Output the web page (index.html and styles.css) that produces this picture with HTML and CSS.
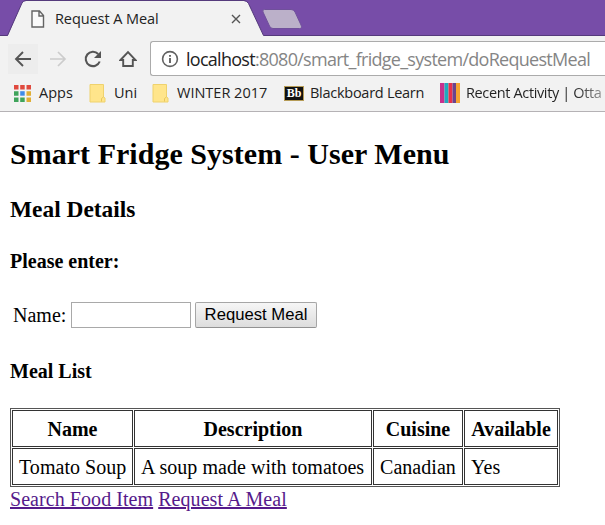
FILE: index.html
```html
<!DOCTYPE html>
<html lang="en">
<head>
<meta charset="utf-8">
<title>Request A Meal</title>
<link rel="stylesheet" href="styles.css">
</head>
<body>
<header class="browser">
  <div class="tabstrip">
    <svg class="tabshape" width="605" height="36" viewBox="0 0 605 36">
      <path d="M0 36H7.500L22 3Q23 1 26 1H244Q247 1 248.500 3.500L263.500 35.500H605V36Z" fill="#f2f2f2"/>
      <path d="M0 35.500H7.500L22 3Q23 .5 26 .5H244Q247 .5 248.500 3.500L263.500 35.500H605" fill="none" stroke="#553a7c"/>
      <path d="M264.500 9.500H291Q294 9.500 295 12L301 25Q302.500 28.500 299.500 28.500H273Q270.500 28.500 269.500 26L263 12Q262 9.500 264.500 9.500Z" fill="#bbb0c9" stroke="#70509b"/>
    </svg>
    <div class="tab">
      <svg width="14" height="18" viewBox="0 0 14 18"><path d="M1 1H8.500L12.500 5.500V17H1ZM8 1V6H12.500" fill="#fafafa" stroke="#646464" stroke-width="1.400"/></svg>
      <span class="tabtitle">Request A Meal</span>
      <svg class="close" width="10" height="10" viewBox="0 0 10 10"><path d="M1 1L9 9M9 1L1 9" stroke="#555" stroke-width="1.400"/></svg>
    </div>
  </div>
  <nav class="toolbar">
    <span class="nav back"><svg width="18" height="16" viewBox="0 0 18 16"><path d="M17 8H2M9 1L2 8L9 15" fill="none" stroke="#555" stroke-width="1.900"/></svg></span>
    <span class="nav forward"><svg width="18" height="16" viewBox="0 0 18 16"><path d="M1 8H16M9 1L16 8L9 15" fill="none" stroke="#ccc" stroke-width="1.700"/></svg></span>
    <span class="nav"><svg width="18" height="18" viewBox="0 0 18 18"><path d="M14.200 4A7.200 7.200 0 1 0 15.700 11.500" fill="none" stroke="#555" stroke-width="2.100"/><path d="M17 1V8H10Z" fill="#555"/></svg></span>
    <span class="nav home"><svg width="18" height="18" viewBox="0 0 18 18"><path d="M1.500 10L9 2.200L16.500 10H13.800V16H4.200V10Z" fill="none" stroke="#555" stroke-width="1.900"/></svg></span>
    <div class="address">
      <svg width="18" height="18" viewBox="0 0 18 18"><circle cx="9" cy="9" r="7.400" fill="none" stroke="#626262" stroke-width="1.600"/><path d="M9 8V13M9 5V6.800" stroke="#626262" stroke-width="1.900"/></svg>
      <span class="url"><span class="host">localhost</span>:8080/smart_fridge_system/doRequestMeal</span>
    </div>
  </nav>
  <div class="bookmarks">
    <svg class="apps" width="17" height="17" viewBox="0 0 17 17">
      <path d="M0 0h4.500v4.500H0zM6.200 0h4.500v4.500H6.200zM12.500 0H17v4.500h-4.500z" fill="#e04a3f"/>
      <path d="M0 6.200h4.500v4.500H0zM0 12.500h4.500V17H0zM6.200 12.500h4.500V17H6.200z" fill="#3fa45b"/>
      <path d="M6.200 6.200h4.500v4.500H6.200z" fill="#3f8be8"/>
      <path d="M12.500 6.200H17v4.500h-4.500zM12.500 12.500H17V17h-4.500z" fill="#e0ae34"/>
    </svg>
    <span class="bm bm-apps">Apps</span>
    <svg class="folder" width="17" height="19" viewBox="0 0 17 19"><path d="M1 .5H14.500V13L16 14V18H1Z" fill="#ffe58b" stroke="#efd26d"/><path d="M12.500 17.500V14.500L14.500 13" fill="none" stroke="#e8c75c"/></svg>
    <span class="bm bm-uni">Uni</span>
    <svg class="folder" width="17" height="19" viewBox="0 0 17 19"><path d="M1 .5H14.500V13L16 14V18H1Z" fill="#ffe58b" stroke="#efd26d"/><path d="M12.500 17.500V14.500L14.500 13" fill="none" stroke="#e8c75c"/></svg>
    <span class="bm bm-winter">WINTER 2017</span>
    <span class="bb">Bb</span>
    <span class="bm bm-board">Blackboard Learn</span>
    <svg class="stripes" width="20" height="20" viewBox="0 0 20 20"><path d="M0 0h4.500v20H0z" fill="#c8308d"/><path d="M4.500 0h4v20h-4z" fill="#21a9be"/><path d="M8.500 0h4v20h-4z" fill="#e8304b"/><path d="M12.500 0h3.500v20h-3.500z" fill="#69438e"/><path d="M16 0h4v20h-4z" fill="#f5a331"/></svg>
    <span class="bm bm-recent">Recent Activity | Otta</span>
  </div>
</header>
<main>
  <h2>Smart Fridge System - User Menu</h2>
  <h3>Meal Details</h3>
  <h4>Please enter:</h4>
  <form>
    <label for="name">Name:</label>
    <input id="name" type="text">
    <button type="button">Request Meal</button>
  </form>
  <h4 class="list">Meal List</h4>
  <table>
    <colgroup><col class="c1"><col class="c2"><col class="c3"><col class="c4"></colgroup>
    <tr><th>Name</th><th>Description</th><th>Cuisine</th><th>Available</th></tr>
    <tr><td>Tomato Soup</td><td>A soup made with tomatoes</td><td>Canadian</td><td>Yes</td></tr>
  </table>
  <div class="links"><a href="#">Search Food Item</a> <a href="#">Request A Meal</a></div>
</main>
</body>
</html>
```
FILE: styles.css
```css
* { box-sizing: border-box; }
body { margin: 0; width: 605px; height: 525px; overflow: hidden; background: #fff; color: #000; font: 20px "Liberation Serif", serif; }
svg { display: block; flex: none; }

.browser { height: 112px; background: #f2f2f2; border-bottom: 1px solid #b5b2b5; font-family: "Open Sans", "Noto Sans", sans-serif; white-space: nowrap; }
.tabstrip { position: relative; height: 36px; background: #774da8; }
.tabshape { position: absolute; left: 0; top: 0; }
.tab { position: relative; display: flex; align-items: center; height: 38px; padding-left: 31px; }
.tabtitle { width: 103px; margin: -2px 0 0 10px; font-size: 14.500px; letter-spacing: -.08px; color: #222; }
.close { margin-left: 73px; }

.toolbar { display: flex; align-items: center; height: 41px; margin-top: 2px; padding-left: 8px; }
.nav { display: flex; flex: none; align-items: center; justify-content: center; width: 30px; height: 30px; margin-right: 5px; }
.back { background: #ededed; }
.home { margin-right: 7px; }
.address { display: flex; align-items: center; flex: 1; height: 35px; padding-left: 10px; background: #fff; border: 1px solid #ababab; border-right: 0; border-radius: 3px 0 0 3px; }
.url { margin-left: 7px; font-size: 18px; letter-spacing: -.72px; line-height: 30px; color: #858585; }
.host { color: #222; }

.bookmarks { display: flex; align-items: center; height: 28px; padding-left: 14px; }
.bm { flex: none; margin-top: -2px; font-size: 14.500px; color: #222; }
.bm-apps { width: 50px; margin-left: 8px; }
.bm-uni { width: 38px; margin-left: 8px; }
.bm-winter { width: 107px; margin-left: 8px; }
.bm-board { width: 130px; margin-left: 6px; letter-spacing: -.27px; }
.bm-recent { width: 139px; margin-left: 6px; letter-spacing: -.36px; background: linear-gradient(90deg, #222 108px, #999 138px); background-clip: text; -webkit-background-clip: text; color: transparent; }
.bb { flex: none; width: 20px; height: 15px; background: #111; border: 1px solid #b69c57; color: #fff; font: bold 12px/12px "Liberation Serif", serif; text-align: center; }

main { padding: 25px 0 0 10px; }
h2, h3, h4 { margin: 0; white-space: nowrap; }
h2 { font-size: 30px; line-height: 34px; letter-spacing: .03px; }
h3 { margin-top: 25px; font-size: 23.400px; line-height: 26px; }
h4 { margin-top: 27px; font-size: 20px; line-height: 24px; }
form { display: flex; align-items: center; height: 26px; margin-top: 29px; padding-left: 3px; }
label { width: 58px; line-height: 26px; }
input { width: 120px; height: 26px; padding: 1px; border: 1px solid #a9a9a9; background: #fff; }
button { width: 122px; height: 26px; margin-left: 4px; padding: 0; border: 1px solid #a6a6a6; border-bottom-color: #929292; border-radius: 2px; background: linear-gradient(#f6f6f6, #ddd); color: #000; font: 16.670px/20px "Liberation Sans", sans-serif; white-space: nowrap; }
.list { margin-top: 31px; }
table { width: 550px; height: 79px; margin-top: 25px; table-layout: fixed; border: 1px solid #555; border-spacing: 1px; border-collapse: separate; }
th, td { height: 37px; padding: 2px 6px 0; border: 1px solid #333; white-space: nowrap; line-height: 23px; }
td { text-align: left; letter-spacing: .04px; }
.c1 { width: 121px; }
.c2 { width: 238px; }
.c3 { width: 90px; }
.c4 { width: 94px; }
.links { line-height: 24px; letter-spacing: .06px; }
a { color: #551a8b; }
```
